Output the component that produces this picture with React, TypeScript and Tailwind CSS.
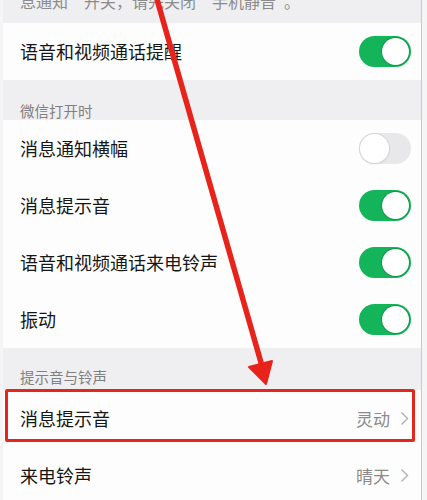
import React from "react";

const cjk = "font-['Noto_Sans_CJK_SC','Noto_Sans',sans-serif]";

function Toggle({ on }: { on: boolean }) {
  return on ? (
    <div className="w-[52px] h-[31px] rounded-full bg-[#13b45a] flex items-center justify-end p-[2px]">
      <div className="w-[27px] h-[27px] rounded-full bg-white shadow-[0_0_0_1px_#0e9a4a]" />
    </div>
  ) : (
    <div className="w-[52px] h-[31px] rounded-full bg-[#e8e8ea] flex items-center justify-start p-[1px]">
      <div className="w-[29px] h-[29px] rounded-full bg-white shadow-[0_0_0_1px_#d6d6d8,0_1px_2px_rgba(0,0,0,0.12)]" />
    </div>
  );
}

function Chevron() {
  return (
    <svg width="9" height="15" viewBox="0 0 9 15" className="ml-[10px]">
      <path d="M1.5 1.5 L7.5 7.5 L1.5 13.5" fill="none" stroke="#b0b0b0" strokeWidth="1.4" />
    </svg>
  );
}

function SwitchRow({ label, on }: { label: string; on: boolean }) {
  return (
    <div className="h-[57px] bg-[#fdfdfd] flex items-center justify-between pl-[17px] pr-[10px]">
      <span className="text-[18px] text-[#161616]">{label}</span>
      <Toggle on={on} />
    </div>
  );
}

function ValueRow({ label, value, marked }: { label: string; value: string; marked?: boolean }) {
  return (
    <div className="relative h-[57px] bg-[#fdfdfd] flex items-center justify-between pl-[17px] pr-[12px]">
      <span className="text-[18px] text-[#161616]">{label}</span>
      <div className="flex items-center">
        <span className="text-[17px] text-[#8a8a8a]">{value}</span>
        <Chevron />
      </div>
      {marked && (
        <div className="absolute left-[2px] right-[6px] top-[-1px] bottom-[5px] border-[3px] border-[#e3261e] rounded-[2px]" />
      )}
    </div>
  );
}

function SectionHeader({ title, h, pt }: { title: string; h: string; pt: string }) {
  return (
    <div className={`${h} ${pt} bg-[#efeff1] pl-[17px]`}>
      <span className="text-[14.5px] leading-[18px] text-[#808080]">{title}</span>
    </div>
  );
}

export default function App() {
  return (
    <div className={`relative w-[427px] h-[500px] overflow-hidden bg-[#f5f5f5] ${cjk}`}>
      <div className="ml-[3px] w-[419px] min-h-full border-r border-[#c9c9c9] bg-[#efeff1]">
        {/* tail of the hint text above */}
        <div className="h-[23px] overflow-hidden pl-[17px]">
          <div className="mt-[-9px] text-[16px] leading-[20px] text-[#8c8c8c] whitespace-nowrap">
            息通知“开关，请先关闭“手机静音”。
          </div>
        </div>
        <SwitchRow label="语音和视频通话提醒" on />

        <SectionHeader title="微信打开时" h="h-[40px]" pt="pt-[18px]" />
        <SwitchRow label="消息通知横幅" on={false} />
        <SwitchRow label="消息提示音" on />
        <SwitchRow label="语音和视频通话来电铃声" on />
        <SwitchRow label="振动" on />

        <SectionHeader title="提示音与铃声" h="h-[42px]" pt="pt-[16px]" />
        <ValueRow label="消息提示音" value="灵动" marked />
        <ValueRow label="来电铃声" value="晴天" />
      </div>

      {/* red pointer arrow */}
      <svg className="absolute inset-0 pointer-events-none" width="427" height="500" viewBox="0 0 427 500">
        <line x1="156" y1="-4" x2="262" y2="366" stroke="#e8231b" strokeWidth="5.5" strokeLinecap="round" />
        <path d="M249 367 L272 361 L266 384 Z" fill="#e8231b" stroke="#e8231b" strokeWidth="2" strokeLinejoin="round" />
      </svg>
    </div>
  );
}
